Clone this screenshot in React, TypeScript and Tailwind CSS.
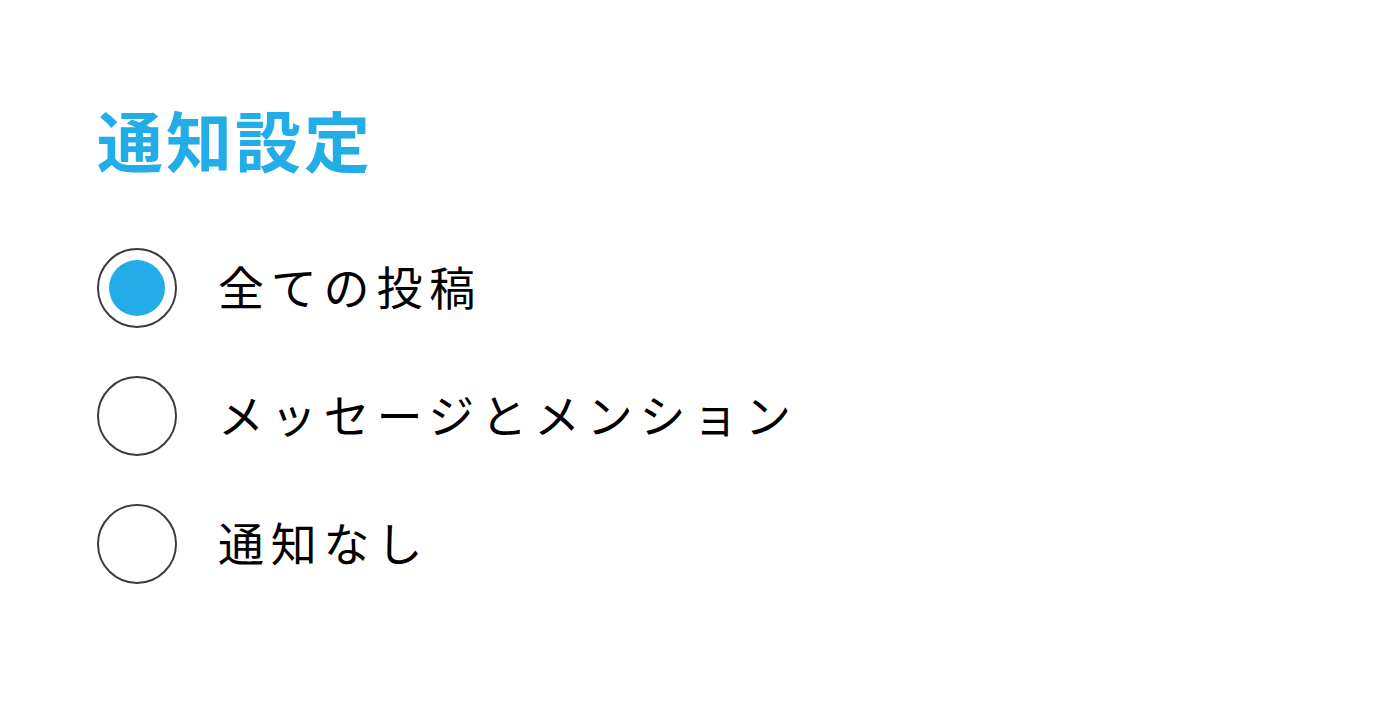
import React, { useState } from "react";

const options = ["全ての投稿", "メッセージとメンション", "通知なし"];

export default function App() {
  const [selected, setSelected] = useState(0);
  return (
    <div
      className="min-h-[704px] w-full bg-white pl-[97px] pt-[95px]"
      style={{ fontFamily: '"Noto Sans CJK JP", "Noto Sans", sans-serif' }}
    >
      <h1 className="text-[66px] font-bold leading-[86px] tracking-[3px] text-[#22ade8]">通知設定</h1>
      <div className="mt-[67px] flex flex-col gap-[48px]">
        {options.map((label, i) => (
          <label key={label} className="flex cursor-pointer items-center gap-[41px]">
            <span className="flex h-[80px] w-[80px] items-center justify-center rounded-full border-2 border-[#3b3a45]">
              {selected === i && <span className="h-[56px] w-[56px] rounded-full bg-[#22ade8]" />}
            </span>
            <input
              type="radio"
              name="notify"
              className="hidden"
              checked={selected === i}
              onChange={() => setSelected(i)}
            />
            <span className="pb-[6px] text-[46px] leading-[60px] tracking-[6.8px] text-black">{label}</span>
          </label>
        ))}
      </div>
    </div>
  );
}
